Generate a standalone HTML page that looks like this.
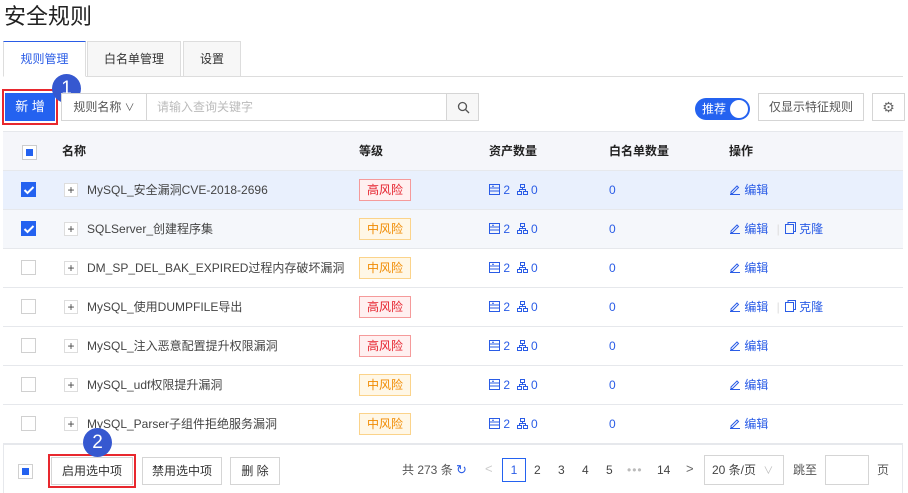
<!DOCTYPE html>
<html><head><meta charset="utf-8"><style>
*{box-sizing:border-box;margin:0;padding:0}
body{width:908px;height:493px;background:#fff;font-family:"Liberation Sans","Noto Sans CJK SC",sans-serif;font-size:12px;line-height:16px;color:#333;position:relative;overflow:hidden}
.a{position:absolute}
.title{left:4px;top:2px;font-size:22px;line-height:30px;color:#222}
.tab{top:41px;height:36px;border:1px solid #ddd;background:#f7f7f7;font-size:12px;line-height:34px;text-align:center;color:#333}
.tab.on{background:#fff;border-top:1px solid #2a5ce6;border-bottom:1px solid #fff;color:#2a5ce6}
.btn{border:1px solid #d5d5d5;background:#fff;text-align:center;color:#333}
.badge{width:29px;height:29px;border-radius:50%;background:#3658d0;color:#fff;font-size:19px;text-align:center;line-height:29px}
.row{left:3px;width:900px;height:39px;border-bottom:1px solid #e6e8ec}
.cb{width:15px;height:15px;border:1px solid #d0d0d0;background:#fff}
.cb.on{background:#2462f0;border-color:#2462f0}
.plus{width:14px;height:14px;border:1px solid #ddd;background:#fff;font-size:12px;line-height:12px;text-align:center;color:#444}
.tag{height:22px;width:52px;font-size:12px;line-height:20px;text-align:center}
.hi{border:1px solid #f59a9a;background:#fff0f0;color:#e5202b}
.mid{border:1px solid #fbd38a;background:#fff7e6;color:#f08a00}
.blue{color:#2a5ce6}
.hd{font-weight:bold;color:#222}
</style></head><body>
<div class="a title">安全规则</div>
<div class="a" style="left:3px;top:76px;width:900px;height:1px;background:#ddd"></div>
<div class="a tab on" style="left:3px;width:83px">规则管理</div>
<div class="a tab" style="left:87px;width:94px">白名单管理</div>
<div class="a tab" style="left:183px;width:58px">设置</div>

<div class="a" style="left:2px;top:89px;width:56px;height:36px;border:2px solid #e8282e"></div>
<div class="a" style="left:5px;top:93px;width:50px;height:28px;background:#2462f0;color:#fff;font-size:13px;line-height:28px;text-align:center">新 增</div>
<div class="a badge" style="left:52px;top:74px">1</div>
<div class="a btn" style="left:61px;top:93px;width:86px;height:28px;line-height:26px;color:#555">规则名称 <span style="font-size:10px">∨</span></div>
<div class="a btn" style="left:146px;top:93px;width:301px;height:28px;line-height:26px;text-align:left;padding-left:10px;color:#bbb">请输入查询关键字</div>
<div class="a btn" style="left:446px;top:93px;width:33px;height:28px;background:#f7f7f7">
<svg class="a" style="left:10px;top:7px" width="13" height="13" viewBox="0 0 13 13"><circle cx="5.5" cy="5.5" r="4" fill="none" stroke="#555" stroke-width="1.3"/><path d="M8.5 8.5L12 12" stroke="#555" stroke-width="1.3"/></svg></div>

<div class="a" style="left:695px;top:98px;width:55px;height:22px;border-radius:11px;background:#2462f0;color:#fff;font-size:12px;line-height:22px;padding-left:7px">推荐<div class="a" style="left:35px;top:2px;width:18px;height:18px;border-radius:50%;background:#fff"></div></div>
<div class="a btn" style="left:758px;top:93px;width:106px;height:28px;line-height:26px;color:#555">仅显示特征规则</div>
<div class="a btn" style="left:872px;top:93px;width:33px;height:28px;line-height:26px;color:#666;font-size:14px">⚙</div>

<div class="a" style="left:3px;top:131px;width:900px;height:362px;border-left:1px solid #e6e8ec;border-right:1px solid #e6e8ec;border-top:1px solid #e6e8ec"></div>
<div class="a row" style="top:132px;background:#f5f6fa;height:39px">
<div class="a cb" style="left:19px;top:13px;border-color:#ccc"><div class="a" style="left:3px;top:3px;width:7px;height:7px;background:#2462f0"></div></div>
<div class="a hd" style="left:59px;top:11px">名称</div>
<div class="a hd" style="left:356px;top:11px">等级</div>
<div class="a hd" style="left:486px;top:11px">资产数量</div>
<div class="a hd" style="left:606px;top:11px">白名单数量</div>
<div class="a hd" style="left:726px;top:11px">操作</div>
</div>

<div id="rows"></div>
<script>
var d=[["MySQL_安全漏洞CVE-2018-2696","hi",1,0,"#e9f0fd"],["SQLServer_创建程序集","mid",1,1,"#f5f7fb"],["DM_SP_DEL_BAK_EXPIRED过程内存破坏漏洞","mid",0,0,"#fff"],["MySQL_使用DUMPFILE导出","hi",0,1,"#fff"],["MySQL_注入恶意配置提升权限漏洞","hi",0,0,"#fff"],["MySQL_udf权限提升漏洞","mid",0,0,"#fff"],["MySQL_Parser子组件拒绝服务漏洞","mid",0,0,"#fff"]];
var h="";
var asset='<svg width="11" height="11" viewBox="0 0 11 11" style="vertical-align:-1px"><rect x="0.5" y="0.5" width="10" height="10" fill="none" stroke="#2a5ce6"/><path d="M0.5 4H10.5M0.5 7H10.5M3 2.2H5" stroke="#2a5ce6"/></svg>';
var net='<svg width="11" height="11" viewBox="0 0 11 11" style="vertical-align:-1px"><rect x="3.5" y="0.5" width="4" height="3" fill="none" stroke="#2a5ce6"/><rect x="0.5" y="7.5" width="4" height="3" fill="none" stroke="#2a5ce6"/><rect x="6.5" y="7.5" width="4" height="3" fill="none" stroke="#2a5ce6"/><path d="M5.5 3.5V5.5M2.5 7.5V5.5H8.5V7.5" fill="none" stroke="#2a5ce6"/></svg>';
var pen='<svg width="12" height="12" viewBox="0 0 12 12" style="vertical-align:-1px"><path d="M2 9L8 3L9.5 4.5L3.5 10.5H2Z M1 11.5H11" fill="none" stroke="#2a5ce6"/></svg>';
var cp='<svg width="11" height="12" viewBox="0 0 11 12" style="vertical-align:-1px"><path d="M3 2.5V0.5H10.5V9.5H8.5M0.5 2.5H8.5V11.5H0.5Z" fill="none" stroke="#2a5ce6"/></svg>';
d.forEach(function(r,i){var t=171+i*39;
h+='<div class="a row" style="top:'+t+'px;background:'+r[4]+'">'+
'<div class="a cb'+(i<2?' on':'')+'" style="left:18px;top:11px">'+(i<2?'<svg class="a" style="left:1px;top:2px" width="12" height="10" viewBox="0 0 12 10"><path d="M1.5 5L4.5 8L10.5 2" fill="none" stroke="#fff" stroke-width="2"/></svg>':'')+'</div>'+
'<div class="a plus" style="left:61px;top:12px">+</div>'+
'<div class="a" style="left:84px;top:11px;color:#444">'+r[0]+'</div>'+
'<div class="a tag '+r[1]+'" style="left:356px;top:8px">'+(r[1]=="hi"?"高风险":"中风险")+'</div>'+
'<div class="a blue" style="left:486px;top:11px">'+asset+' 2 &nbsp;'+net+' 0</div>'+
'<div class="a blue" style="left:606px;top:11px">0</div>'+
'<div class="a blue" style="left:726px;top:11px">'+pen+' 编辑'+(r[3]?' <span style="color:#ddd;margin:0 5px">|</span>'+cp+' 克隆':'')+'</div></div>';});
document.getElementById("rows").innerHTML=h;
</script>

<div class="a" style="left:3px;top:444px;width:900px;height:1px;background:#e6e8ec"></div>
<div class="a cb" style="left:18px;top:464px"><div class="a" style="left:3px;top:3px;width:7px;height:7px;background:#2462f0"></div></div>
<div class="a" style="left:48px;top:454px;width:88px;height:34px;border:2px solid #e8282e"></div>
<div class="a btn" style="left:51px;top:457px;width:82px;height:28px;line-height:26px">启用选中项</div>
<div class="a btn" style="left:142px;top:457px;width:80px;height:28px;line-height:26px">禁用选中项</div>
<div class="a btn" style="left:230px;top:457px;width:50px;height:28px;line-height:26px">删 除</div>
<div class="a badge" style="left:83px;top:428px">2</div>

<div class="a" style="left:402px;top:462px;color:#555">共 273 条 <span class="blue" style="font-size:13px">↻</span></div>
<div class="a" style="left:485px;top:461px;color:#ccc;font-size:13px">&lt;</div>
<div class="a" style="left:502px;top:458px;width:24px;height:24px;border:1px solid #2462f0;text-align:center;line-height:22px;color:#2a5ce6">1</div>
<div class="a" style="left:534px;top:462px;color:#444">2</div>
<div class="a" style="left:558px;top:462px;color:#444">3</div>
<div class="a" style="left:582px;top:462px;color:#444">4</div>
<div class="a" style="left:606px;top:462px;color:#444">5</div>
<div class="a" style="left:627px;top:462px;color:#bbb;letter-spacing:1px">•••</div>
<div class="a" style="left:657px;top:462px;color:#444">14</div>
<div class="a" style="left:686px;top:461px;color:#666;font-size:13px">&gt;</div>
<div class="a btn" style="left:704px;top:455px;width:80px;height:30px;line-height:28px;color:#444;text-align:left;padding-left:7px">20 条/页 <span style="color:#bbb;font-size:10px;margin-left:4px">∨</span></div>
<div class="a" style="left:793px;top:462px;color:#555">跳至</div>
<div class="a btn" style="left:825px;top:455px;width:44px;height:30px"></div>
<div class="a" style="left:877px;top:462px;color:#555">页</div>
</body></html>
